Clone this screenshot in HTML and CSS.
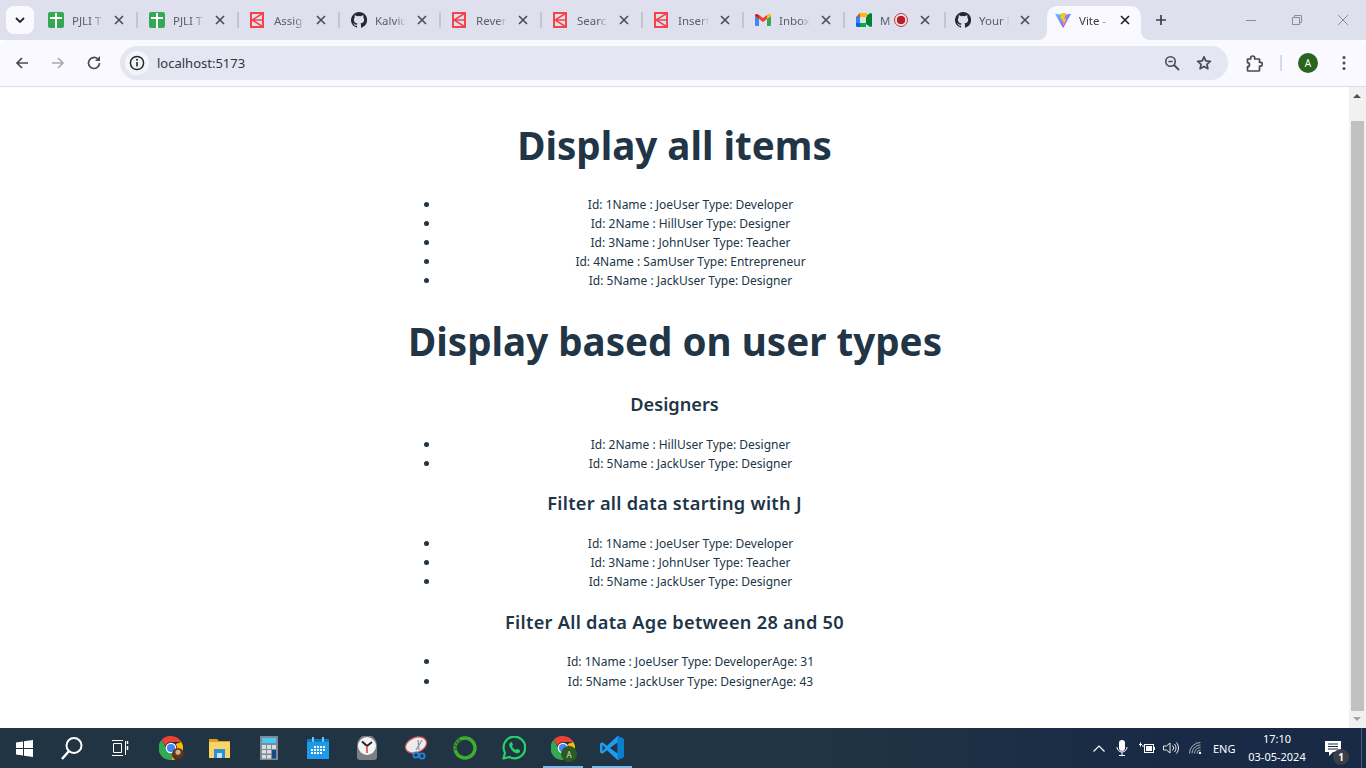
FILE: index.html
```html
<!DOCTYPE html>
<html lang="en">
<head>
<meta charset="utf-8">
<title>Vite + React</title>
<link rel="stylesheet" href="styles.css">
</head>
<body>
<svg class="defs" width="0" height="0" aria-hidden="true">
  <defs>
    <symbol id="i-sheet" viewBox="0 0 16 16"><rect width="16" height="16" rx="2" fill="#34a853"/><path d="M2 5h12v2H9v9H7V7H2zM7 1h2v4H7z" fill="#fff"/></symbol>
    <symbol id="i-k" viewBox="0 0 14 16"><rect x="1" y="1" width="12" height="14" fill="none" stroke="#f4434b" stroke-width="2"/><path d="M12.500 1.500 2 8l10.500 6.500M2 8h10.500" fill="none" stroke="#f4434b" stroke-width="1.500"/></symbol>
    <symbol id="i-gh" viewBox="0 0 16 16"><path fill="#24292f" d="M8 0a8 8 0 0 0-2.530 15.590c.4.070.55-.170.55-.380v-1.340c-2.230.480-2.700-1.070-2.700-1.070-.360-.930-.890-1.170-.890-1.170-.730-.500.050-.490.050-.490.800.060 1.230.830 1.230.830.710 1.230 1.870.870 2.330.660.070-.520.280-.870.510-1.070-1.780-.2-3.640-.890-3.640-3.950 0-.870.310-1.590.820-2.150-.080-.2-.360-1.020.080-2.120 0 0 .670-.210 2.200.820a7.600 7.600 0 0 1 4 0c1.530-1.040 2.200-.820 2.200-.820.440 1.100.160 1.920.080 2.120.510.560.820 1.270.820 2.150 0 3.070-1.870 3.750-3.650 3.950.290.250.540.740.540 1.490v2.200c0 .210.150.460.550.380A8 8 0 0 0 8 0z"/></symbol>
    <symbol id="i-gmail" viewBox="0 0 16 12"><path d="M1 12h3V5L0 2v9a1 1 0 0 0 1 1z" fill="#4285f4"/><path d="M12 12h3a1 1 0 0 0 1-1V2l-4 3z" fill="#34a853"/><path d="M12 1v4l4-3V1.500C16 .200 14.500-.500 13.500.300z" fill="#fbbc04"/><path d="M4 5V1l4 3 4-3v4L8 8z" fill="#ea4335"/><path d="M0 1.500V2l4 3V1L2.500.300C1.500-.500 0 .200 0 1.500z" fill="#c5221f"/></symbol>
    <symbol id="i-meet" viewBox="0 0 16 14"><path d="M0 4h4v6H0z" fill="#2684fc"/><path d="M4 0h6v4H4z" fill="#ffba00"/><path d="M4 0 0 4h4z" fill="#ea4335"/><path d="M0 10v2.500A1.500 1.500 0 0 0 1.500 14H4v-4z" fill="#0066da"/><path d="M4 10h6v4H4z" fill="#00ac47"/><path d="M10 3v8l3.500 2.500c.8.500 2.500.500 2.500-.5V1c0-1-1.700-1-2.500-.5z" fill="#00832d"/><path d="M10 0h-1v4h2V1z" fill="#ffba00"/></symbol>
    <symbol id="i-vite" viewBox="0 0 16 16"><path d="M15.800 2.300 8.500 15.400c-.2.300-.600.300-.800 0L.2 2.300c-.2-.3.100-.700.400-.600L8 3l7.400-1.300c.3-.1.600.300.400.600z" fill="url(#g-vite)"/><path d="M11.500.1 6 1.200c-.1 0-.2.100-.2.200l-.3 5.700c0 .1.100.2.300.200l1.500-.4c.2 0 .3.100.3.300l-.5 2.200c0 .2.100.3.300.300l1-.3c.2 0 .3.100.3.300l-.7 3.300c0 .2.300.3.400.100l.1-.2 3-6c.1-.2 0-.3-.2-.3l-1.600.3c-.2 0-.3-.1-.3-.3l1-3.600 1-3.100c0-.2-.1-.3-.3-.3z" fill="#ffc517"/><linearGradient id="g-vite" x1="0" y1="0" x2="1" y2="1"><stop offset="0" stop-color="#41d1ff"/><stop offset="1" stop-color="#bd34fe"/></linearGradient></symbol>
    <symbol id="i-close" viewBox="0 0 10 10"><path d="M1 1l8 8M9 1 1 9" fill="none" stroke="currentColor" stroke-width="1.600"/></symbol>
    <symbol id="i-chrome" viewBox="0 0 24 24"><path d="M12 0a12 12 0 0 1 10.400 6H12a6 6 0 0 0-5.600 3.800L2.600 3.900A12 12 0 0 1 12 0z" fill="#ea4335"/><path d="M22.400 6A12 12 0 0 1 12 24l4.700-8.500A6 6 0 0 0 16.600 8z" fill="#fbbc04"/><path d="M12 24A12 12 0 0 1 2.600 3.900l4.800 8.600a5.500 5.500 0 0 0 9.300 3z" fill="#34a853"/><circle cx="12" cy="12" r="4.700" fill="#4285f4" stroke="#fff" stroke-width="1.300"/></symbol>
  </defs>
</svg>

<header class="tabstrip">
  <button class="tabs-menu" type="button"><svg viewBox="0 0 10 6" width="10" height="6"><path d="M1 1l4 4 4-4" fill="none" stroke="#1f2430" stroke-width="1.800"/></svg></button>
  <div class="tab"><svg class="fav"><use href="#i-sheet"/></svg><span class="label">PJLI T</span><svg class="x"><use href="#i-close"/></svg></div>
  <div class="tab"><svg class="fav"><use href="#i-sheet"/></svg><span class="label">PJLI T</span><svg class="x"><use href="#i-close"/></svg></div>
  <div class="tab"><svg class="fav fav-k"><use href="#i-k"/></svg><span class="label">Assig</span><svg class="x"><use href="#i-close"/></svg></div>
  <div class="tab"><svg class="fav"><use href="#i-gh"/></svg><span class="label">Kalviu</span><svg class="x"><use href="#i-close"/></svg></div>
  <div class="tab"><svg class="fav fav-k"><use href="#i-k"/></svg><span class="label">Rever</span><svg class="x"><use href="#i-close"/></svg></div>
  <div class="tab"><svg class="fav fav-k"><use href="#i-k"/></svg><span class="label">Searc</span><svg class="x"><use href="#i-close"/></svg></div>
  <div class="tab"><svg class="fav fav-k"><use href="#i-k"/></svg><span class="label">Insert</span><svg class="x"><use href="#i-close"/></svg></div>
  <div class="tab"><svg class="fav"><use href="#i-gmail"/></svg><span class="label">Inbox</span><svg class="x"><use href="#i-close"/></svg></div>
  <div class="tab tab-meet"><svg class="fav"><use href="#i-meet"/></svg><span class="label label-short">M</span><span class="rec"></span><svg class="x"><use href="#i-close"/></svg></div>
  <div class="tab tab-nodiv"><svg class="fav"><use href="#i-gh"/></svg><span class="label">Your l</span><svg class="x"><use href="#i-close"/></svg></div>
  <div class="tab tab-active"><svg class="fav"><use href="#i-vite"/></svg><span class="label">Vite -</span><svg class="x"><use href="#i-close"/></svg></div>
  <button class="newtab" type="button"><svg viewBox="0 0 12 12" width="12" height="12"><path d="M6 1v10M1 6h10" fill="none" stroke="#3c4043" stroke-width="1.700"/></svg></button>
  <div class="winctl">
    <svg viewBox="0 0 46 12" width="46" height="12"><path d="M18 6.500h10" stroke="#8a8d96" fill="none"/></svg>
    <svg viewBox="0 0 46 12" width="46" height="12"><path d="M18.500 3.500h7v7h-7zM20.500 3.500v-2h7v7h-2" stroke="#8a8d96" fill="none"/></svg>
    <svg viewBox="0 0 46 12" width="46" height="12"><path d="M18 1l10 10M28 1 18 11" stroke="#8a8d96" fill="none"/></svg>
  </div>
</header>

<nav class="toolbar">
  <div class="nav-buttons">
    <svg class="tool" viewBox="0 0 16 16"><path d="M14 8H3M8 3 3 8l5 5" fill="none" stroke="#474b55" stroke-width="1.700"/></svg>
    <svg class="tool" viewBox="0 0 16 16"><path d="M2 8h11M8 3l5 5-5 5" fill="none" stroke="#a9abb3" stroke-width="1.700"/></svg>
    <svg class="tool" viewBox="0 0 16 16"><path d="M13.500 8a5.500 5.500 0 1 1-1.700-4" fill="none" stroke="#474b55" stroke-width="1.700"/><path d="M14 1v5H9z" fill="#474b55"/></svg>
  </div>
  <div class="omnibox">
    <span class="info"><svg viewBox="0 0 16 16" width="16" height="16"><circle cx="8" cy="8" r="6.600" fill="none" stroke="#26282e" stroke-width="1.500"/><path d="M8 7v4.500" stroke="#26282e" stroke-width="1.600"/><circle cx="8" cy="4.800" r="1" fill="#26282e"/></svg></span>
    <span class="url">localhost:5173</span>
    <svg class="omni-icon" viewBox="0 0 16 16"><circle cx="6.500" cy="6.500" r="4.700" fill="none" stroke="#474b55" stroke-width="1.600"/><path d="M10 10l5 5" stroke="#474b55" stroke-width="1.800"/><path d="M4.300 6.500h4.400" stroke="#474b55" stroke-width="1.400"/></svg>
    <svg class="omni-icon star" viewBox="0 0 16 16"><path d="M8 1.800l1.800 4.100 4.500.4-3.400 3 1 4.400L8 11.400l-3.900 2.300 1-4.400-3.400-3 4.500-.4z" fill="none" stroke="#474b55" stroke-width="1.700" stroke-linejoin="round"/></svg>
  </div>
  <div class="tool-right">
    <svg class="puzzle" viewBox="0 0 17 17"><path d="M1.500 4h3.200V3a2 2 0 0 1 4 0v1h4.800v3.300h1a1.900 1.900 0 0 1 0 3.800h-1v4.100a.8.800 0 0 1-.8.800H2.300a.8.800 0 0 1-.8-.8v-3.500a2 2 0 0 0 0-4z" fill="none" stroke="#474b55" stroke-width="1.700" stroke-linejoin="round"/></svg>
    <span class="tool-sep"></span>
    <span class="avatar">A</span>
    <svg class="tool menu" viewBox="0 0 4 16"><circle cx="2" cy="2.500" r="1.500" fill="#474b55"/><circle cx="2" cy="8" r="1.500" fill="#474b55"/><circle cx="2" cy="13.500" r="1.500" fill="#474b55"/></svg>
  </div>
</nav>

<div class="viewport">
  <main class="page">
    <div class="root">
      <h1 class="h1-all">Display all items</h1>
      <ul>
        <li>Id: 1Name : JoeUser Type: Developer</li>
        <li>Id: 2Name : HillUser Type: Designer</li>
        <li>Id: 3Name : JohnUser Type: Teacher</li>
        <li>Id: 4Name : SamUser Type: Entrepreneur</li>
        <li>Id: 5Name : JackUser Type: Designer</li>
      </ul>
      <h1 class="h1-types">Display based on user types</h1>
      <h3>Designers</h3>
      <ul>
        <li>Id: 2Name : HillUser Type: Designer</li>
        <li>Id: 5Name : JackUser Type: Designer</li>
      </ul>
      <h3 class="h3-wide">Filter all data starting with J</h3>
      <ul class="ul-j">
        <li>Id: 1Name : JoeUser Type: Developer</li>
        <li>Id: 3Name : JohnUser Type: Teacher</li>
        <li>Id: 5Name : JackUser Type: Designer</li>
      </ul>
      <h3 class="h3-wide h3-age">Filter All data Age between 28 and 50</h3>
      <ul class="ul-age">
        <li>Id: 1Name : JoeUser Type: DeveloperAge: 31</li>
        <li>Id: 5Name : JackUser Type: DesignerAge: 43</li>
      </ul>
    </div>
  </main>
  <aside class="scrollbar">
    <span class="arrow-up"></span>
    <span class="thumb"></span>
    <span class="arrow-down"></span>
  </aside>
</div>

<footer class="taskbar">
  <div class="slot slot-wide"><svg viewBox="0 0 17 17" width="17" height="17"><path d="M0 2.400 7 1.400v6.500H0zM8 1.300 17 0v7.900H8zM0 9h7v6.600l-7-1zM8 9h9v8l-9-1.300z" fill="#fff"/></svg></div>
  <div class="slot slot-wide"><svg viewBox="0 0 24 24" width="24" height="24"><circle cx="14" cy="9.500" r="7.500" fill="none" stroke="#fff" stroke-width="2"/><path d="M9 15 2 23" stroke="#fff" stroke-width="2.400"/></svg></div>
  <div class="slot slot-wide"><svg viewBox="0 0 18 16" width="18" height="16"><path d="M1 .5h11M1 15.500h11M2.500 3.500h8v9h-8zM14.500 1v14" fill="none" stroke="#fff"/><path d="M16.500 1v3M16.500 6v4" stroke="#fff" stroke-width="1.500"/></svg></div>
  <div class="apps">
    <div class="slot"><svg viewBox="0 0 24 24" width="24" height="24"><use href="#i-chrome"/></svg><span class="mini-photo"></span></div>
    <div class="slot"><svg viewBox="0 0 21 19" width="21" height="19"><path d="M0 0h8l2 2h11v5H0z" fill="#d9a12a"/><path d="M0 3h21v16H0z" fill="#fbd465"/><path d="M5 10h11v9H5z" fill="#2b8fd8"/><path d="M8 14h5v5H8z" fill="#bfe3f7"/></svg></div>
    <div class="slot"><svg viewBox="0 0 18 24" width="18" height="24"><rect width="18" height="24" fill="#7f8a94"/><rect x="2" y="2" width="14" height="5" fill="#44cdf0"/><g fill="#d8dde2"><path d="M2 9h4v4H2zM7 9h4v4H7zM12 9h4v4h-4zM2 14h4v3.500H2zM7 14h4v3.500H7zM2 19h4v3.500H2zM7 19h4v3.500H7z"/></g><path d="M12 14h4v8.500h-4z" fill="#154a86"/></svg></div>
    <div class="slot"><svg viewBox="0 0 22 22" width="22" height="22"><rect y="2" width="22" height="20" fill="#1e9be8"/><path d="M0 2h22v3H0z" fill="#0f78bf"/><path d="M5 0h2v5H5zM15 0h2v5h-2z" fill="#6cc4f5"/><g fill="#fff"><path d="M7 9h2v2H7zM10 9h2v2h-2zM13 9h2v2h-2zM16 9h2v2h-2zM4 12h2v2H4zM7 12h2v2H7zM10 12h2v2h-2zM13 12h2v2h-2zM16 12h2v2h-2zM4 15h2v2H4zM7 15h2v2H7zM10 15h2v2h-2zM13 15h2v2h-2z"/></g></svg></div>
    <div class="slot"><svg viewBox="0 0 24 24" width="24" height="24"><path d="M2 21V9a10 10 0 0 1 20 0v12a3 3 0 0 1-3 3H5a3 3 0 0 1-3-3z" fill="#7a7f85"/><circle cx="12" cy="10" r="9" fill="#f4f4f4"/><path d="M12 10 7 5.500M12 10l5-4" stroke="#222" stroke-width="1.800" fill="none"/><path d="M12 10v7" stroke="#d8452e" stroke-width="1.500"/></svg></div>
    <div class="slot"><svg viewBox="0 0 24 24" width="24" height="24"><ellipse cx="12" cy="9" rx="11" ry="7.500" transform="rotate(-22 12 9)" fill="#ececec" stroke="#c95055" stroke-width="1.300"/><path d="M14 4l1 10M18 4l-6 10" stroke="#8a8f95" stroke-width="1.200" fill="none"/><circle cx="12" cy="19" r="2.600" fill="none" stroke="#2b83d8" stroke-width="1.800"/><circle cx="18" cy="20" r="2.600" fill="none" stroke="#2b83d8" stroke-width="1.800"/></svg></div>
    <div class="slot"><svg viewBox="0 0 24 24" width="24" height="24"><circle cx="12" cy="12" r="10" fill="none" stroke="#3fae2a" stroke-width="3.400"/><path d="M7 3.800A10 10 0 0 0 2.600 15" fill="none" stroke="#2a6b3a" stroke-width="3.400" stroke-dasharray="2 1.300"/></svg></div>
    <div class="slot"><svg viewBox="0 0 24 24" width="24" height="24"><path d="M1.500 22.500 3 16.800A10.800 10.800 0 1 1 7.300 21z" fill="none" stroke="#25d366" stroke-width="2.200" stroke-linejoin="round"/><path d="M8.500 6.500c-1.300 1-1.600 2.500-1 4 1.200 3 3.400 5.300 6.500 6.500 1.500.5 3 .2 3.800-1.100l.3-1.700-3-1.500-1.200 1.400c-1.800-.7-3.300-2.200-4-4l1.200-1.200-1.400-3.100z" fill="#25d366"/></svg></div>
    <div class="slot slot-on"><svg viewBox="0 0 24 24" width="24" height="24"><use href="#i-chrome"/></svg><span class="mini-a">A</span></div>
    <div class="slot slot-on"><svg viewBox="0 0 24 24" width="24" height="24"><path d="M17.500 0 24 3v18l-6.500 3L7 14.200 2.500 17.800 0 16.500v-9L2.500 6.200 7 9.800z" fill="#1f9cf0"/><path d="M17.500 0 24 3v18l-6.500 3z" fill="#0a7fd0"/><path d="M17.500 6.500 10 12l7.500 5.500z" fill="#213443"/><path d="M2.500 9v6l3-3z" fill="#213443"/></svg></div>
  </div>
  <div class="tray">
    <svg class="t-caret" viewBox="0 0 12 7" width="12" height="7"><path d="M.5 6.500 6 1l5.500 5.500" fill="none" stroke="#fff" stroke-width="1.200"/></svg>
    <svg class="t-mic" viewBox="0 0 12 16" width="12" height="16"><rect x="3" y="0" width="6" height="11" rx="3" fill="#fff"/><path d="M1 7a5 5 0 0 0 10 0M6 12v3M3 15.500h6" fill="none" stroke="#fff"/></svg>
    <svg class="t-bat" viewBox="0 0 16 12" width="16" height="12"><path d="M0 2.500h3M1.500 .5v4M3 4h2" stroke="#fff"/><rect x="5.500" y="2.500" width="9" height="8" fill="#1a2b45" stroke="#fff"/><rect x="7" y="4" width="6" height="5" fill="#fff"/><path d="M15 5h1v3h-1z" fill="#fff"/></svg>
    <svg class="t-vol" viewBox="0 0 16 12" width="16" height="12"><path d="M.5 4h3L7 1v10L3.500 8h-3zM9.500 3.500a3.500 3.500 0 0 1 0 5M11.500 2a6 6 0 0 1 0 8M13.500.5a8.500 8.500 0 0 1 0 11" fill="none" stroke="#fff" stroke-width=".9"/></svg>
    <svg class="t-wifi" viewBox="0 0 14 12" width="14" height="12"><path d="M.5 11.500a11 11 0 0 1 11-11M3 11.500a8.500 8.500 0 0 1 8.500-8.500M5.500 11.500a6 6 0 0 1 6-6M8 11.500a3.500 3.500 0 0 1 3.500-3.500" fill="none" stroke="#c9ced6" stroke-width=".8"/><circle cx="11" cy="11" r="1.200" fill="#fff"/></svg>
    <span class="t-lang">ENG</span>
    <span class="t-clock"><span>17:10</span><span>03-05-2024</span></span>
    <span class="t-note"><svg viewBox="0 0 16 15" width="16" height="15"><path d="M0 0h16v11H8l-4 4v-4H0z" fill="#fff"/><path d="M3 3h10M3 5.500h10M3 8h10" stroke="#1a2b45"/></svg><span class="badge">1</span></span>
    <span class="t-desk"></span>
  </div>
</footer>
</body>
</html>
```
FILE: styles.css
```css
* { box-sizing: border-box; }
html, body { margin: 0; height: 100%; overflow: hidden; }
body {
  width: 1366px; height: 768px;
  display: flex; flex-direction: column;
  font-family: "Noto Sans", "Open Sans", sans-serif;
  background: #fff;
}
.defs { position: absolute; }
button { border: 0; padding: 0; background: none; }

/* Tab strip */
.tabstrip {
  height: 40px; flex: none;
  display: flex; align-items: flex-end;
  padding-left: 6px;
  background: #dee1ed;
}
.tabs-menu {
  width: 28px; height: 28px; margin: 0 3px 6px 0;
  display: flex; align-items: center; justify-content: center;
  background: #f9f9fe; border-radius: 8px;
}
.tab {
  position: relative;
  width: 101px; height: 34px; flex: none;
  display: flex; align-items: center;
  padding: 0 0 6px 11px;
  color: #5a5e69; font-size: 11.5px;
}
.tab::after {
  content: ""; position: absolute; right: 0; top: 6px;
  width: 2px; height: 16px; background: #c4c6cf;
}
.tab-nodiv { padding-left: 9px; }
.tab-nodiv::after { display: none; }
.tab-active {
  width: 94px; padding-left: 8px;
  background: #f9f9ff; border-radius: 10px 10px 0 0;
  color: #3a3d45;
}
.tab-active::before, .tab-active::after {
  content: ""; display: block; position: absolute; top: auto; bottom: 0;
  width: 8px; height: 8px; background: none;
}
.tab-active::before { left: -8px; background: radial-gradient(circle at 0 0, transparent 7.500px, #f9f9ff 8px); }
.tab-active::after { right: -8px; background: radial-gradient(circle at 100% 0, transparent 7.500px, #f9f9ff 8px); }
.fav { width: 16px; height: 16px; flex: none; }
.fav-k { width: 14px; }
.fav-k + .label { margin-left: 10px; }
.label {
  width: 31px; margin-left: 8px; flex: none;
  overflow: hidden; white-space: nowrap;
  -webkit-mask-image: linear-gradient(90deg, #000 68%, transparent);
  mask-image: linear-gradient(90deg, #000 68%, transparent);
}
.label-short { width: 12px; }
.rec {
  width: 14px; height: 14px; margin-left: 2px; flex: none;
  border: 1.500px solid #d0343a; border-radius: 50%;
  background: radial-gradient(circle, #bb1d22 0 4px, transparent 4.500px);
}
.x { width: 10px; height: 10px; margin-left: 11px; flex: none; color: #474b55; }
.tab-meet .x { margin-left: 12px; }
.tab-nodiv .x { margin-left: 10px; }
.tab-active .x { color: #1c1e24; margin-left: 10px; }
.newtab { width: 12px; height: 12px; margin: 0 0 14px 14px; flex: none; display: flex; }
.winctl { margin: 0 0 14px auto; display: flex; flex: none; }
.winctl svg { display: block; }

/* Toolbar */
.toolbar {
  height: 47px; flex: none;
  display: flex; align-items: flex-start;
  background: #f9f9ff;
  border-bottom: 1px solid #dcdde8;
  border-radius: 8px 8px 0 0;
  padding-top: 6px;
}
.nav-buttons { display: flex; gap: 20px; width: 120px; padding: 9px 0 0 14px; flex: none; }
.tool { width: 16px; height: 16px; display: block; flex: none; }
.omnibox {
  width: 1108px; height: 34px; flex: none;
  display: flex; align-items: center;
  background: #e4e6f2; border-radius: 17px;
  padding: 0 16px 0 5px;
}
.info {
  width: 24px; height: 24px; flex: none;
  display: flex; align-items: center; justify-content: center;
  background: #f4f5fb; border-radius: 50%;
}
.url { margin-left: 8px; font-size: 13px; color: #33363d; flex: 1; }
.omni-icon { width: 16px; height: 16px; flex: none; }
.star { margin-left: 16px; }
.tool-right { display: flex; align-items: center; height: 34px; flex: none; padding-left: 18px; }
.puzzle { width: 17px; height: 17px; flex: none; display: block; }
.tool-sep { width: 2px; height: 16px; margin: 0 16px 0 17px; background: #cfdcf5; }
.avatar {
  width: 20px; height: 20px; flex: none;
  display: flex; align-items: center; justify-content: center;
  border-radius: 50%; background: #2b641c; color: #fff; font-size: 10px;
}
.menu { width: 4px; margin-left: 24px; }

/* Viewport */
.viewport { flex: 1; min-height: 0; display: flex; }
.page { flex: 1; min-width: 0; overflow: hidden; color: #213547; }
.root { width: 533px; margin: 0 auto; text-align: center; padding-top: 33px; }
h1 { margin: 0; font-size: 38.6px; line-height: 50px; font-weight: 700; white-space: nowrap; }
h3 { margin: 0 0 19px; font-size: 18.2px; line-height: 24px; font-weight: 600; white-space: nowrap; }
.h3-wide { letter-spacing: .28px; }
ul { margin: 0 0 18px; padding: 0 0 0 32px; font-size: 12px; line-height: 19px; list-style: none; }
li { position: relative; }
li::before {
  content: ""; position: absolute; left: -16px; top: 7px;
  width: 5px; height: 5px; border-radius: 50%; background: #213547;
}
.h1-all { margin-bottom: 25px; }
.h1-types { margin-top: 26px; margin-bottom: 26px; }
.ul-j { margin-bottom: 19px; }
.h3-age { margin-bottom: 18px; }
.ul-age li + li { margin-top: 1px; }
.scrollbar {
  width: 17px; flex: none; position: relative;
  background: #f1f1f1;
}
.thumb { position: absolute; left: 2px; right: 2px; top: 34px; bottom: 17px; background: #c1c1c1; }
.arrow-up, .arrow-down { position: absolute; left: 4px; width: 0; height: 0; border: 4px solid transparent; }
.arrow-up { top: 3px; border-bottom: 4px solid #505050; }
.arrow-down { bottom: 3px; border-top: 4px solid #a3a3a3; }

/* Taskbar */
.taskbar {
  height: 40px; flex: none;
  display: flex; align-items: center;
  background: linear-gradient(90deg, #213443 0, #213443 60%, #182a45 85%);
}
.slot { position: relative; width: 49px; height: 40px; flex: none; display: flex; align-items: center; justify-content: center; }
.slot-wide { width: 48px; }
.apps { display: flex; margin-left: 2px; }
.slot-on::after {
  content: ""; position: absolute; left: 5px; right: 4px; bottom: 0;
  height: 2px; background: #76b9ed;
}
.mini-photo {
  position: absolute; left: 26px; top: 20px;
  width: 12px; height: 12px; border-radius: 50%;
  background: radial-gradient(circle at 50% 35%, #d8b08c 0 2px, #6b3a22 3px, #3a241c);
}
.mini-a {
  position: absolute; left: 23px; top: 18px;
  width: 16px; height: 16px; border-radius: 50%;
  display: flex; align-items: center; justify-content: center;
  background: #2b5a22; color: #cfe0c8; font-size: 8px;
}
.tray { position: relative; flex: 1; height: 40px; display: flex; align-items: center; color: #fff; padding-left: 457px; }
.t-caret { margin-right: 11px; flex: none; }
.t-mic { margin-right: 11px; flex: none; }
.t-bat { margin-right: 8px; flex: none; }
.t-vol { margin-right: 10px; flex: none; }
.t-wifi { margin-right: 10px; flex: none; }
.t-lang { font-size: 11px; width: 24px; flex: none; }
.t-clock { width: 80px; flex: none; display: flex; flex-direction: column; align-items: center; font-size: 11px; line-height: 18px; }
.t-note { position: relative; margin-left: 8px; display: flex; flex: none; }
.badge {
  position: absolute; left: 8px; top: 8px;
  width: 16px; height: 16px; border-radius: 50%;
  display: flex; align-items: center; justify-content: center;
  background: #3b3f45; color: #fff; font-size: 10px; font-weight: 700;
}
.t-desk { position: absolute; right: 4px; top: 0; bottom: 0; width: 1px; background: #4a5c74; }
```
